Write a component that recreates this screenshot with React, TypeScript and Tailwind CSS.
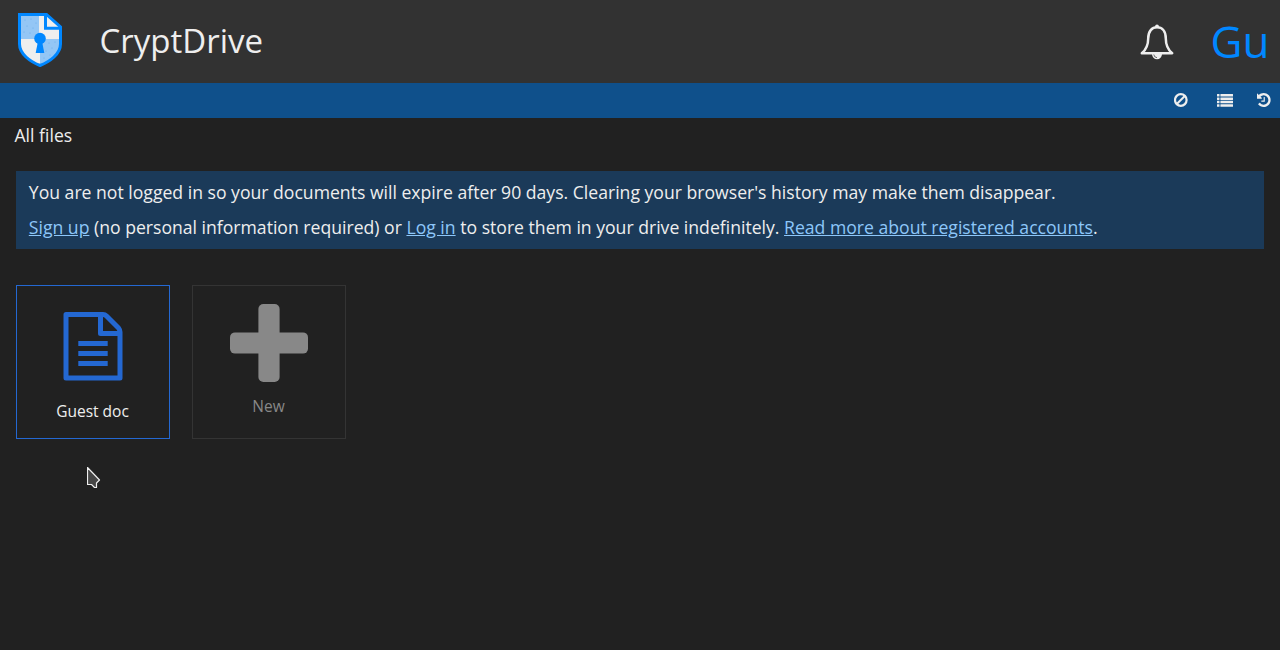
import React from "react";

const HISTORY =
  "M1536 896q0 156-61 298t-164 245-245 164-298 61q-172 0-327-72.5t-264-204.5q-7-10-6.5-22.5t8.5-20.5l137-138q10-9 25-9 16 2 23 12 73 95 179 147t225 52q104 0 198.5-40.5t163.5-109.5 109.5-163.5 40.5-198.5-40.5-198.5-109.5-163.5-163.5-109.5-198.5-40.5q-98 0-188 35.5t-160 101.5l137 138q31 30 14 69-17 40-59 40h-448q-26 0-45-19t-19-45v-448q0-42 40-59 39-17 69 14l130 129q107-101 244.5-156.5t284.5-55.5q156 0 298 61t245 164 164 245 61 298zm-640-288v448q0 14-9 23t-23 9h-320q-14 0-23-9t-9-23v-64q0-14 9-23t23-9h224v-352q0-14 9-23t23-9h64q14 0 23 9t9 23z";

const LOGO_DOTS = [
  [7, 7], [13, 6], [18, 10], [9, 13], [15, 15], [6, 19], [12, 20],
  [31, 30], [37, 29], [34, 35], [28, 38], [26, 45], [32, 42],
];

function Logo() {
  return (
    <svg width="44" height="55" viewBox="0 0 44 55" className="mb-[2px] ml-[18px] block shrink-0">
      <path d="M1.5 1.5H28L42.5 14V31C42.5 41 32 48.5 22 52.5C12 48.5 1.5 41 1.5 31Z" fill="#eee" />
      <path d="M1.5 1.5H21V26H1.5ZM22 26H42.5V31C42.5 41 32 48.5 22 52.5Z" fill="#94c6f5" />
      {LOGO_DOTS.map(([x, y]) => (
        <circle key={`${x}-${y}`} cx={x} cy={y} r=".6" fill="#6aaeea" />
      ))}
      <path d="M1.5 1.5H28.5L42.5 14V31C42.5 41 32 48.5 22 52.5C12 48.5 1.5 41 1.5 31Z" fill="none" stroke="#0087ff" strokeWidth="3" />
      <path d="M27.5 1.5V15.2H42.5" fill="none" stroke="#0087ff" strokeWidth="3" />
      <circle cx="22" cy="25.5" r="5.8" fill="#0087ff" />
      <path d="M20 28H24L26.3 40H17.7Z" fill="#0087ff" />
    </svg>
  );
}

function Bell() {
  return (
    <svg width="34" height="36" viewBox="0 0 34 36" className="block">
      <path d="M1.8 29.3C7 25 8.2 20 8.2 14.5C8.2 7 12 3.3 17 3.3S25.8 7 25.8 14.5C25.8 20 27 25 32.2 29.3Z" fill="none" stroke="#eee" strokeWidth="2.5" strokeLinejoin="round" />
      <circle cx="17" cy="2.3" r="1.9" fill="#eee" />
      <path d="M12 30H22A5 5.3 0 0 1 12 30Z" fill="#eee" />
      <path d="M13.8 30.5Q14 33.3 17 33.7" fill="none" stroke="#323232" strokeWidth=".7" />
    </svg>
  );
}

function Toolbar() {
  return (
    <div className="flex h-[35px] items-center justify-end bg-[#0f508b] pr-[9px] pb-px">
      <svg width="14" height="14" viewBox="0 0 14 14" className="mr-[29px] block">
        <circle cx="6.8" cy="7" r="5.8" fill="none" stroke="#eee" strokeWidth="2.2" />
        <path d="M2.8 11L10.8 3" stroke="#eee" strokeWidth="2" />
      </svg>
      <svg width="16" height="13" viewBox="0 0 16 13" className="mr-6 block" fill="#eee">
        {[0, 3.4, 6.8, 10.2].map((y) => (
          <g key={y}>
            <rect x="0" y={y} width="2.5" height="2.5" rx=".3" />
            <rect x="3.4" y={y} width="12.6" height="2.5" rx=".3" />
          </g>
        ))}
      </svg>
      <svg width="14" height="14" viewBox="40 128 1536 1536" className="block" fill="#eee">
        <path d={HISTORY} />
      </svg>
    </div>
  );
}

function Link({ children }: { children: React.ReactNode }) {
  return <a className="text-[#8dc7fa] underline">{children}</a>;
}

export default function App() {
  return (
    <div className="relative h-[650px] w-[1280px] overflow-hidden bg-[#212121] font-['Open_Sans',sans-serif] text-[#eee]">
      <header className="flex h-[83px] items-center bg-[#323232]">
        <Logo />
        <h1 className="mb-[2px] ml-[37.5px] text-[33px] leading-[46px]">CryptDrive</h1>
        <div className="mr-[37px] ml-auto">
          <Bell />
        </div>
        <div className="mr-[10.5px] mb-[2px] text-[44px] leading-[60px] text-[#0087ff]">Gu</div>
      </header>
      <Toolbar />
      <main className="px-4">
        <div className="-ml-[1.5px] h-[53px] pt-[4px] text-[17.6px] leading-[26px]">All files</div>
        <div className="h-[78px] bg-[#1b3a59] px-[12.8px] pt-[4px] text-[17.616px] leading-[35px] whitespace-nowrap">
          <p>You are not logged in so your documents will expire after 90 days. Clearing your browser's history may make them disappear.</p>
          <p>
            <Link>Sign up</Link> (no personal information required) or <Link>Log in</Link> to store them in your drive indefinitely.{" "}
            <Link>Read more about registered accounts</Link>.
          </p>
        </div>
        <div className="mt-9 flex gap-[22px]">
          <div className="flex h-[154px] w-[154px] flex-col items-center border border-[#2468d2] pt-[26px] pr-px">
            <svg width="60" height="69" viewBox="0 0 60 69" className="block" fill="none" stroke="#2468d2" strokeWidth="5" strokeLinejoin="round">
              <path d="M3 2.5H40Q42 2.5 43.500 4L55.5 16Q57 18 57 20V66H3Z" />
              <path d="M37.5 3V21.5H57" />
              <path d="M15.3 31.500H44.700M15.300 41.500H44.700M15.300 51.500H44.700" />
            </svg>
            <span className="mt-[19px] text-[15.5px] leading-[22px]">Guest doc</span>
          </div>
          <div className="flex h-[154px] w-[154px] flex-col items-center border border-[#343434] pt-[18px] pr-px text-[#888]">
            <svg width="78" height="78" viewBox="0 0 78 78" className="block" fill="#888">
              <rect x="28.4" y="0" width="21.2" height="78" rx="5" />
              <rect x="0" y="28.4" width="78" height="21.2" rx="5" />
            </svg>
            <span className="mt-[13px] text-[15.5px] leading-[22px]">New</span>
          </div>
        </div>
      </main>
      <svg width="14" height="22" viewBox="0 0 14 22" className="absolute top-[467px] left-[87px]">
        <path d="M.5.5V17.5H4.5L7.5 20.5H9.5V16L12.5 13Z" fill="#464646" stroke="#eee" strokeWidth="1.2" strokeLinejoin="round" />
      </svg>
    </div>
  );
}
